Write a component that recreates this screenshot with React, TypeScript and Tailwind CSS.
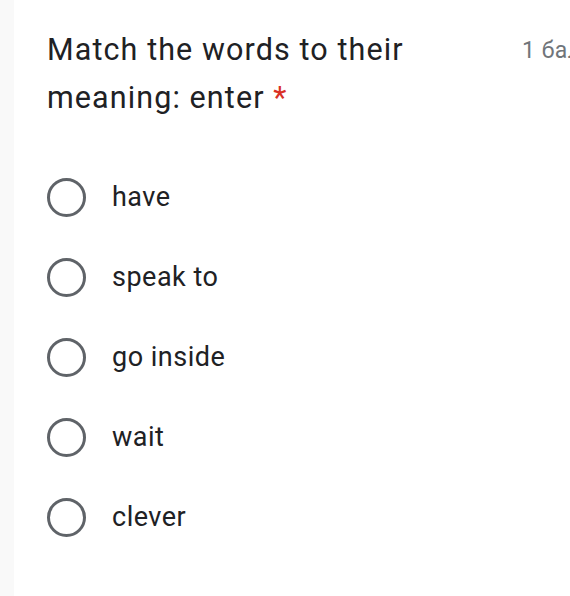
import React from "react";

const options = ["have", "speak to", "go inside", "wait", "clever"];

export default function App() {
  return (
    <div
      className="w-[570px] h-[596px] overflow-hidden bg-white relative"
      style={{ fontFamily: "Roboto, 'Noto Sans', sans-serif" }}
    >
      <div className="absolute left-0 top-0 bottom-0 w-[14px] bg-[#f9f9f9]" />
      <div className="flex pt-[26px] pl-[47px]">
        <div className="w-[440px] shrink-0 text-[30.5px] tracking-[1.1px] leading-[48px] text-[#202124]">
          Match the words to their meaning: enter{" "}
          <span className="text-[#d93025]">*</span>
        </div>
        <div className="ml-[35px] mt-[10px] text-[23px] tracking-[0.5px] leading-[30px] text-[#70757a] whitespace-nowrap">
          1 бал.
        </div>
      </div>
      <div className="flex flex-col pl-[47px] pt-[35px]">
        {options.map((o) => (
          <div key={o} className="flex items-center h-[80px]">
            <div className="w-[39px] h-[39px] rounded-full border-[3px] border-[#5f6368] box-border" />
            <div className="ml-[26px] text-[27px] tracking-[0.5px] text-[#202124]">{o}</div>
          </div>
        ))}
      </div>
    </div>
  );
}
